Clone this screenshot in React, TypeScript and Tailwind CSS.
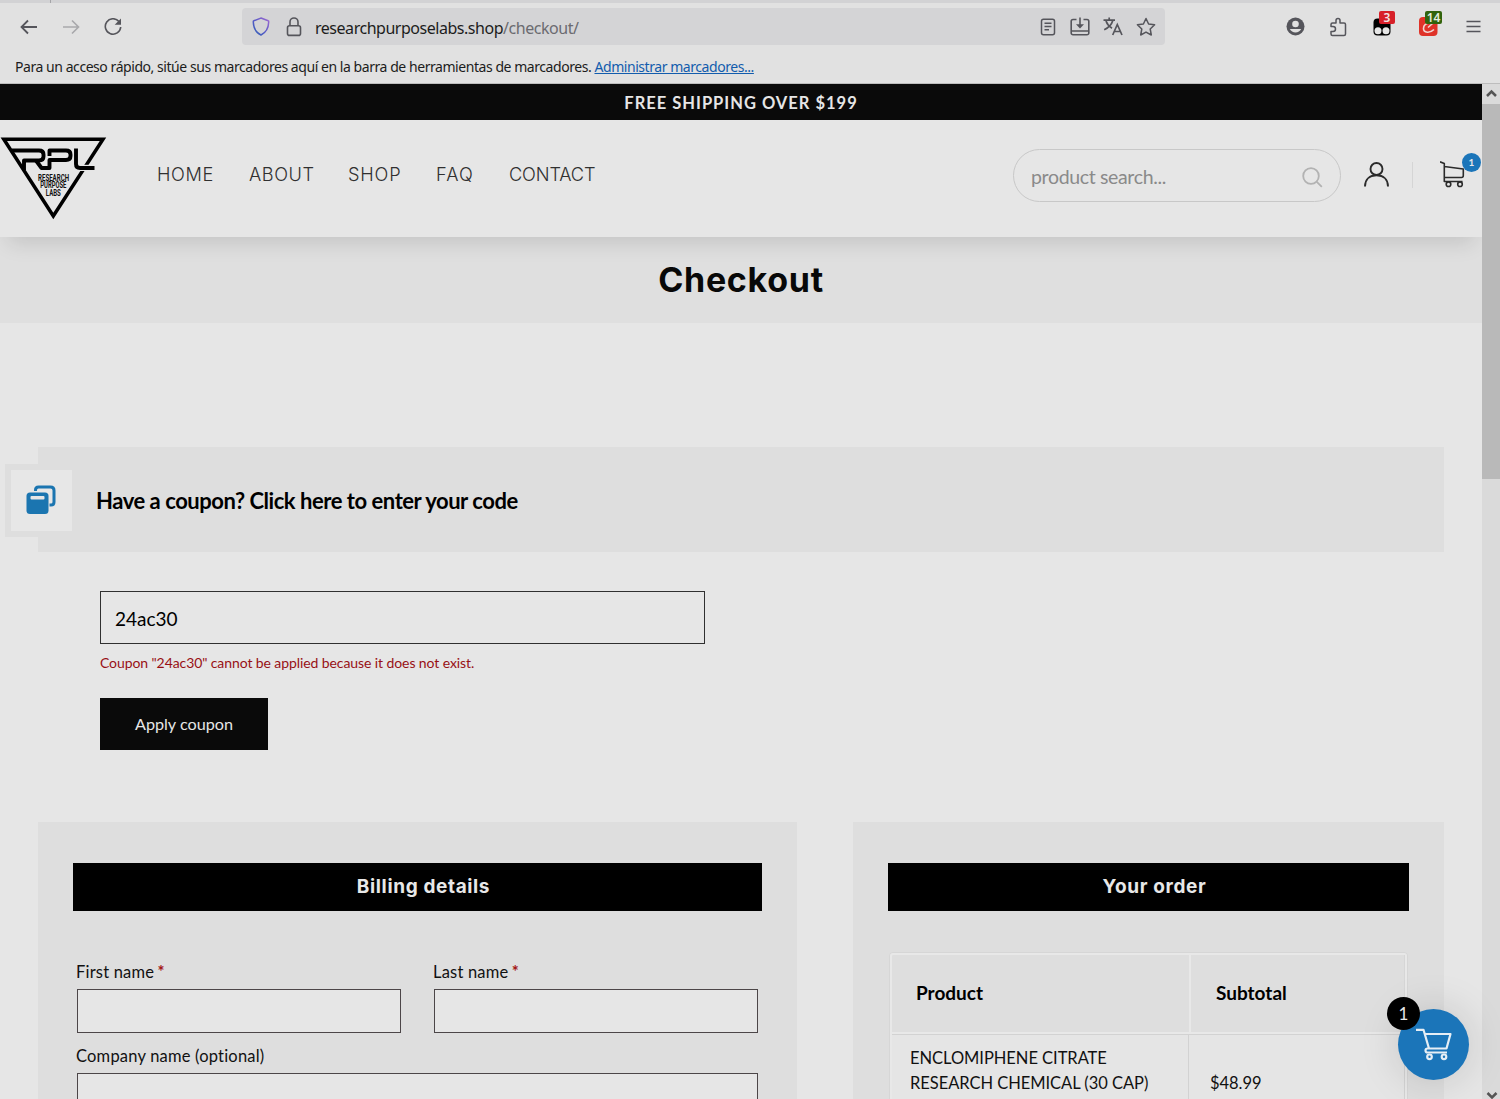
import type { ReactNode } from 'react'

const navLinks = [
  { label: 'HOME', className: 'w-[57px] tracking-[0.6px]' },
  { label: 'ABOUT', className: 'w-16 tracking-[0.55px]' },
  { label: 'SHOP', className: 'w-[53px] tracking-[0.8px]' },
  { label: 'FAQ', className: 'w-[38px] tracking-[1.1px]' },
  { label: 'CONTACT', className: 'w-[86px] tracking-[-0.15px]' },
]

function BrowserToolbar() {
  return (
    <div className="flex h-[50px] items-center bg-[#e1e1e1] pb-[3px] text-[#55555b]">
      <svg className="ml-5 h-[18px] w-[18px] shrink-0" viewBox="0 0 18 18" fill="none" stroke="currentColor" strokeWidth="1.8">
        <path d="M17 9H1.5M8 2.5 1.5 9 8 15.5" />
      </svg>
      <svg className="ml-6 h-[18px] w-[18px] shrink-0 text-[#a9a9ac]" viewBox="0 0 18 18" fill="none" stroke="currentColor" strokeWidth="1.7">
        <path d="M1 9h15.500M10 2.500 16.500 9 10 15.500" />
      </svg>
      <svg className="ml-6 h-[18px] w-[18px] shrink-0" viewBox="0 0 18 18" fill="none" stroke="currentColor" strokeWidth="1.6">
        <path d="M15 3.600A7.700 7.700 0 1 0 16.700 9" />
        <path d="M17 .5V6.800H10.700Z" fill="currentColor" stroke="none" />
      </svg>

      <div className="ml-[120px] flex h-[37px] w-[923px] shrink-0 items-center rounded bg-[#d4d4d6]">
        <svg className="ml-2.5 h-[19px] w-[18px] shrink-0" viewBox="0 0 18 19" fill="none" strokeWidth="1.500">
          <defs>
            <linearGradient id="shield" x1="0" y1="1" x2="1" y2="0">
              <stop offset="0" stopColor="#2f61b5" />
              <stop offset=".5" stopColor="#5a5ac8" />
              <stop offset="1" stopColor="#a06ad0" />
            </linearGradient>
          </defs>
          <path d="M9 1 16.200 3.800Q16.800 4 16.700 5C16.500 11 14 15.500 9 18 4 15.500 1.500 11 1.300 5Q1.200 4 1.800 3.800Z" stroke="url(#shield)" />
        </svg>
        <svg className="ml-4 h-5 w-4 shrink-0" viewBox="0 0 16 20" fill="none" stroke="currentColor" strokeWidth="1.600">
          <rect x="1.500" y="8.800" width="13" height="9.600" rx="2" />
          <path d="M4 8.800V5a4 4 0 0 1 8 0v3.800" />
        </svg>
        <p className="ml-[13px] w-[700px] whitespace-nowrap pt-[2px] font-['Noto_Sans','Open_Sans',sans-serif] text-[16px] leading-6 tracking-[-0.47px] text-[#1c1c20]">
          researchpurposelabs.shop<span className="text-[#6b6b70]">/checkout/</span>
        </p>
        <div className="ml-[25px] flex items-center gap-[13px]">
          <svg className="h-[18px] w-[16px]" viewBox="0 0 16 18" fill="none" stroke="currentColor" strokeWidth="1.500">
            <rect x="1.500" y="1.200" width="13" height="15.600" rx="2" />
            <path d="M4.500 5.200h7M4.500 8.500h7M4.500 11.700h4.500" />
          </svg>
          <svg className="ml-px h-[20px] w-[20px]" viewBox="0 0 20 20" fill="none" stroke="currentColor" strokeWidth="1.600">
            <path d="M6.500 2.500H3A1.800 1.800 0 0 0 1.200 4.300V16A1.800 1.800 0 0 0 3 17.800H17A1.800 1.800 0 0 0 18.800 16V4.300A1.800 1.800 0 0 0 17 2.500H13.500M1.200 14H18.800M10 .5V9.500" />
            <path d="M6 7.200H14L10 11.500Z" fill="currentColor" stroke="none" />
          </svg>
          <svg className="h-[19px] w-[20px]" viewBox="0 0 20 19" fill="none" stroke="currentColor" strokeWidth="1.700">
            <path d="M.5 3.200H12M6.200.5V3M9.800 3.500C8.700 7.500 5.500 10.700 1.200 12.800M3 4C4 7 6.200 9.500 9 11.200M9.700 18 14.300 7.500 19 18M11.300 14.500H17.400" />
          </svg>
          <svg className="h-[20px] w-[20px]" viewBox="0 0 20 20" fill="none" stroke="currentColor" strokeWidth="1.500" strokeLinejoin="round">
            <path d="m10 1.500 2.600 5.500 6 .8-4.400 4.200 1.100 6-5.300-2.900L4.700 18l1.100-6L1.400 7.800l6-.8Z" />
          </svg>
        </div>
      </div>

      <svg className="ml-[121px] h-[19px] w-[19px] shrink-0" viewBox="0 0 19 19">
        <circle cx="9.500" cy="9.500" r="9" fill="#55555b" />
        <circle cx="9.500" cy="7" r="3.300" fill="#e1e1e1" />
        <path d="M3.800 12H15.200A6.500 6.500 0 0 1 3.800 12Z" fill="#e1e1e1" />
      </svg>
      <svg className="ml-6 h-[20px] w-[18px] shrink-0" viewBox="0 0 18 20" fill="none" stroke="currentColor" strokeWidth="1.500" strokeLinejoin="round">
        <path d="M2 9V7.500Q2 6 3.500 6H7V3.500A2 2 0 0 1 11 3.500V6H15Q16.500 6 16.500 7.500V17Q16.500 18.500 15 18.500H3.500Q2 18.500 2 17V14.500H4A2.300 2.300 0 0 0 4 9.500H2Z" />
      </svg>
      <div className="relative ml-[26px] h-[18px] w-[18px] shrink-0">
        <svg className="h-[18px] w-[18px]" viewBox="0 0 18 18">
          <rect x=".5" y=".5" width="17" height="17" rx="4" />
          <circle cx="5" cy="12.800" r="3.500" fill="#e6e6e6" />
          <circle cx="13" cy="12.800" r="3.500" fill="#e6e6e6" />
        </svg>
        <span className="absolute -top-[7px] left-[6px] h-[13px] w-4 rounded-[2px] bg-[#d72029] text-center font-['Noto_Sans',sans-serif] text-[12px] font-semibold leading-[13px] text-[#f1e4e4]">3</span>
      </div>
      <div className="relative ml-[28px] h-[20px] w-[19px] shrink-0">
        <svg className="h-[20px] w-[19px]" viewBox="0 0 19 20" fill="none">
          <rect width="18.500" height="19" rx="4" fill="#df3228" />
          <path d="M12 6C7 6 4.500 8 4.500 11.500 4.500 16 11 16.500 15 12.500M9 10.500 13.500 6.500" stroke="#f0d5d2" strokeWidth="1.600" />
        </svg>
        <span className="absolute -top-[6px] left-[6px] h-[13px] w-[17px] rounded-[2px] bg-[#31630c] text-center font-['Noto_Sans',sans-serif] text-[12px] font-semibold leading-[13px] text-[#e5eddf]">14</span>
      </div>
      <svg className="ml-7 h-[14px] w-[15px] shrink-0" viewBox="0 0 15 14" stroke="currentColor" strokeWidth="1.300">
        <path d="M.5 1.500H14.500M.5 6.500H14.500M.5 11.500H14.500" />
      </svg>
    </div>
  )
}

function Logo() {
  return (
    <svg className="h-[84px] w-[107px]" viewBox="0 0 107 84">
      <path d="M3.800 3.300H103L53.300 80Z" fill="none" stroke="#000" strokeWidth="3.500" />
      {/* break the frame where the lettering crosses it */}
      <path d="M79 28.800H97V35H79Z" fill="#e6e6e6" />
      <g fill="none" stroke="#000" strokeWidth="3.900" strokeLinejoin="round">
        <path d="M12 14.500H39Q43.500 14.500 43.500 18.500V20.500Q43.500 24.500 39 24.500H24V34" />
        <path d="M36 24.500 41.500 32H49.500V24H66Q70.500 24 70.500 20V18.500Q70.500 14.500 66 14.500H49.500V20" />
        <path d="M76 12.500V28Q76 32 80 32H94.500" />
      </g>
      <g fontFamily="Roboto, 'Liberation Sans', sans-serif" fontSize="8.300" fontWeight="700" textAnchor="middle" fill="#111">
        <text x="53.500" y="44.500" textLength="31" lengthAdjust="spacingAndGlyphs">RESEARCH</text>
        <text x="53.300" y="52.300" textLength="26" lengthAdjust="spacingAndGlyphs">PURPOSE</text>
        <text x="53.300" y="60" textLength="15" lengthAdjust="spacingAndGlyphs">LABS</text>
      </g>
    </svg>
  )
}

function SiteHeader() {
  return (
    <header className="relative flex h-[117px] shrink-0 bg-[#e6e6e6] shadow-[0_14px_20px_-8px_rgba(0,0,0,0.12)]">
      <div className="mt-4 h-[84px] w-[107px] shrink-0">
        <Logo />
      </div>
      <nav className="ml-[50px] mt-[42px] flex w-[438px] gap-[35px] whitespace-nowrap font-['Inter',sans-serif] text-[18.200px] font-light leading-6 text-[#303030]">
        {navLinks.map((link) => (
          <a key={link.label} className={link.className}>{link.label}</a>
        ))}
      </nav>
      <div className="ml-[418px] mt-[29px] flex h-[53px] w-[328px] shrink-0 items-center justify-between rounded-full border border-[#c8c8c8] pl-[17px] pr-[17px] text-[#8a8a8a]">
        <span className="pt-0.5 text-[19.500px] tracking-[-0.35px]">product search...</span>
        <svg className="mt-1 h-[21px] w-[21px]" viewBox="0 0 21 21" fill="none" stroke="#b2b2b2" strokeWidth="1.800">
          <circle cx="9" cy="9" r="7.800" />
          <path d="m14.800 14.800 5 5" />
        </svg>
      </div>
      <svg className="ml-[23px] mt-[42px] h-[26px] w-[25px] shrink-0" viewBox="0 0 25 26" fill="none" stroke="#2b2b2b" strokeWidth="1.900">
        <circle cx="12.500" cy="7" r="6" />
        <path d="M1 24.500C1 17 6 13.300 12.500 13.300S24 17 24 24.500" />
      </svg>
      <div className="ml-[23px] mt-[42px] h-[26px] w-px bg-[#d5d5d5]" />
      <div className="relative ml-[27px] mt-[41px] h-[27px] w-[26px] shrink-0">
        <svg className="h-[27px] w-[26px]" viewBox="0 0 26 27" fill="none" stroke="#2b2b2b" strokeWidth="1.600" strokeLinejoin="round">
          <path d="M0 .8 4.300 2.500V20.500H22.500M4.300 5.500 23.300 8V14.500Q23.300 16.500 21.500 16.500H4.300" />
          <circle cx="8.500" cy="23.200" r="2.300" />
          <circle cx="20" cy="23.200" r="2.300" />
        </svg>
        <span className="absolute -top-2 left-[22px] h-[19px] w-[19px] rounded-full bg-[#1b75b9] text-center text-[10px] font-bold leading-[19px] text-[#e6e6e6]">1</span>
      </div>
    </header>
  )
}

function CouponBanner() {
  return (
    <div className="relative ml-[38px] flex h-[105px] w-[1406px] items-center bg-[#dedede] pt-px">
      <div className="-ml-[33px] flex h-[73px] w-[67px] shrink-0 items-center justify-center border-y-[6px] border-l-[6px] border-[#dedede] bg-[#e7e7e7] pr-0.5">
        <svg className="h-[30px] w-[30px]" viewBox="0 0 30 30" fill="none">
          <path d="M9.500 6V5Q9.500 2 12.500 2H24.500Q28 2 28 5.500V17Q28 20 25 20H23.500" stroke="#1b75b0" strokeWidth="3" />
          <rect x=".5" y="7.500" width="22" height="21.500" rx="3.500" fill="#1b75b0" />
          <rect x="4.500" y="11" width="14" height="3.500" rx="1" fill="#e6e6e6" />
        </svg>
      </div>
      <p className="ml-6 whitespace-nowrap text-[22px] font-bold tracking-[-0.46px] text-black">
        Have a coupon? Click here to enter your code
      </p>
    </div>
  )
}

function PanelTitle({ children }: { children: ReactNode }) {
  return (
    <h2 className="h-12 bg-black pl-3 text-center font-['Inter',sans-serif] text-[19px] font-bold leading-[47px] tracking-[0.63px] text-[#e8e8e8]">
      {children}
    </h2>
  )
}

function Field({ label, required, className }: { label: string; required?: boolean; className: string }) {
  return (
    <label className={className}>
      <span className="-ml-px block h-[28px] whitespace-nowrap text-[16.500px] leading-[23px] tracking-[0.2px] text-[#111]">
        {label}
        {required && <span className="-ml-px font-bold text-[#a31515]"> *</span>}
      </span>
      <span className="block h-[44px] border border-[#4c4648] bg-[#e6e6e6]" />
    </label>
  )
}

function BillingPanel() {
  return (
    <section className="h-[277px] w-[759px] shrink-0 overflow-hidden bg-[#dedede] px-[35px] pt-[41px]">
      <PanelTitle>Billing details</PanelTitle>
      <div className="flex flex-wrap gap-x-[33px] gap-y-3 pl-1 pt-[50px]">
        <Field label="First name" required className="w-[324px]" />
        <Field label="Last name" required className="w-[324px]" />
        <Field label="Company name (optional)" className="w-[681px]" />
      </div>
    </section>
  )
}

function OrderPanel() {
  return (
    <section className="h-[277px] w-[591px] shrink-0 overflow-hidden bg-[#dedede] px-[35px] pt-[41px]">
      <PanelTitle>Your order</PanelTitle>
      <div className="ml-px mt-[41px] h-[200px] w-[519px] rounded-t-[4px] border border-[#d6d6d6]">
        <div className="h-full rounded-t-[3px] border-2 border-[#e8e8e8]">
          <div className="flex h-[77px] text-[19px] font-bold text-black">
            <div className="flex w-[299px] items-center border-r-2 border-[#e8e8e8] pb-px pl-6">Product</div>
            <div className="flex flex-1 items-center border-r border-[#d6d6d6] pb-px pl-[25px]">Subtotal</div>
          </div>
          <div className="flex h-[120px] border-t-2 border-[#e8e8e8] bg-[#e5e5e5] text-[16.500px] leading-[25px] tracking-[-0.04px] text-[#111]">
            <div className="w-[297px] whitespace-nowrap border-r border-t border-[#d2d2d2] pl-[18px] pt-[11px]">
              ENCLOMIPHENE CITRATE
              <br />
              RESEARCH CHEMICAL (30 CAP)
            </div>
            <div className="flex-1 border-r border-t border-[#d2d2d2] pl-[21px] pt-[36px]">$48.99</div>
          </div>
        </div>
      </div>
    </section>
  )
}

function Scrollbar() {
  return (
    <div className="relative z-10 flex h-[1015px] w-[18px] shrink-0 flex-col items-center bg-[#dadada]">
      <svg className="h-5 w-[18px] shrink-0" viewBox="0 0 18 20" fill="none" stroke="#555" strokeWidth="2.500">
        <path d="m5 12 4.500-4.500L14 12" />
      </svg>
      <div className="h-[375px] w-full bg-[#b9b9b9]" />
      <svg className="mt-auto h-[9px] w-[18px] shrink-0" viewBox="0 0 18 9" fill="none" stroke="#555" strokeWidth="2.500">
        <path d="m5.500 3 4.500 4.500L14.500 3" />
      </svg>
    </div>
  )
}

function FloatingCart() {
  return (
    <div className="absolute right-[31px] top-[1009px] z-20 flex h-[71px] w-[71px] items-center justify-center rounded-full bg-[#1b75b9] shadow-[0_0_40px_rgba(0,0,0,0.15)]">
      <svg className="ml-px h-[33px] w-[36px]" viewBox="0 0 36 33" fill="none" stroke="#e6eef5" strokeWidth="2.200" strokeLinejoin="round">
        <path d="M0 1.800H7.500L13 20.500H30.500L34.500 6H9M13 20.500H11.500Q9.500 20.500 9.500 22.500T11.500 24.500H31" />
        <circle cx="13.500" cy="28.800" r="2.300" />
        <circle cx="28" cy="28.800" r="2.300" />
      </svg>
      <span className="absolute -left-[11px] -top-3 h-[33px] w-[33px] rounded-full bg-black text-center text-[17px] leading-[33px] text-[#e6e6e6]">1</span>
    </div>
  )
}

export default function App() {
  return (
    <div className="relative h-[1099px] w-[1500px] overflow-hidden bg-[#e6e6e6] font-['Lato',sans-serif]">
      <div className="h-[3px] bg-[#d2d2d4]">
        <div className="h-full w-[51px] border-r border-[#a5a5a8]" />
      </div>
      <BrowserToolbar />
      <div className="h-[31px] whitespace-nowrap border-b border-[#bdbdbd] bg-[#e1e1e1] pl-[15px] font-['Noto_Sans','Open_Sans',sans-serif] text-[14px] leading-[28px] tracking-[-0.445px] text-[#1c1c20]">
        Para un acceso rápido, sitúe sus marcadores aquí en la barra de herramientas de marcadores.{' '}
        <a className="text-[#125cad] underline">Administrar marcadores...</a>
      </div>

      <div className="flex">
        <div className="h-[1015px] w-[1482px] shrink-0 overflow-hidden">
          <div className="h-9 bg-[#0a0a0a] text-center text-[16.500px] font-bold leading-[38px] tracking-[1px] text-[#e6e6e6]">
            FREE SHIPPING OVER $199
          </div>
          <SiteHeader />
          <h1 className="h-[86px] bg-[#dfdfdf] text-center font-['Inter',sans-serif] text-[34px] font-bold leading-[86px] tracking-[0.7px] text-[#080808]">
            Checkout
          </h1>
          <main className="pt-[124px]">
            <CouponBanner />
            <form className="ml-[100px] mt-[39px]">
              <div className="flex h-[53px] w-[605px] items-center border border-[#303030] pl-3.5 pt-[3px] text-[19px] text-black">24ac30</div>
              <p className="mt-[7px] h-[47px] text-[14px] leading-6 tracking-[-0.09px] text-[#981015]">
                Coupon "24ac30" cannot be applied because it does not exist.
              </p>
              <button type="button" className="block h-[52px] w-[168px] bg-[#0a0a0a] text-[16.200px] text-[#e6e6e6]">
                Apply coupon
              </button>
            </form>
            <div className="ml-[38px] mt-[72px] flex gap-14">
              <BillingPanel />
              <OrderPanel />
            </div>
          </main>
        </div>
        <Scrollbar />
      </div>
      <FloatingCart />
    </div>
  )
}
